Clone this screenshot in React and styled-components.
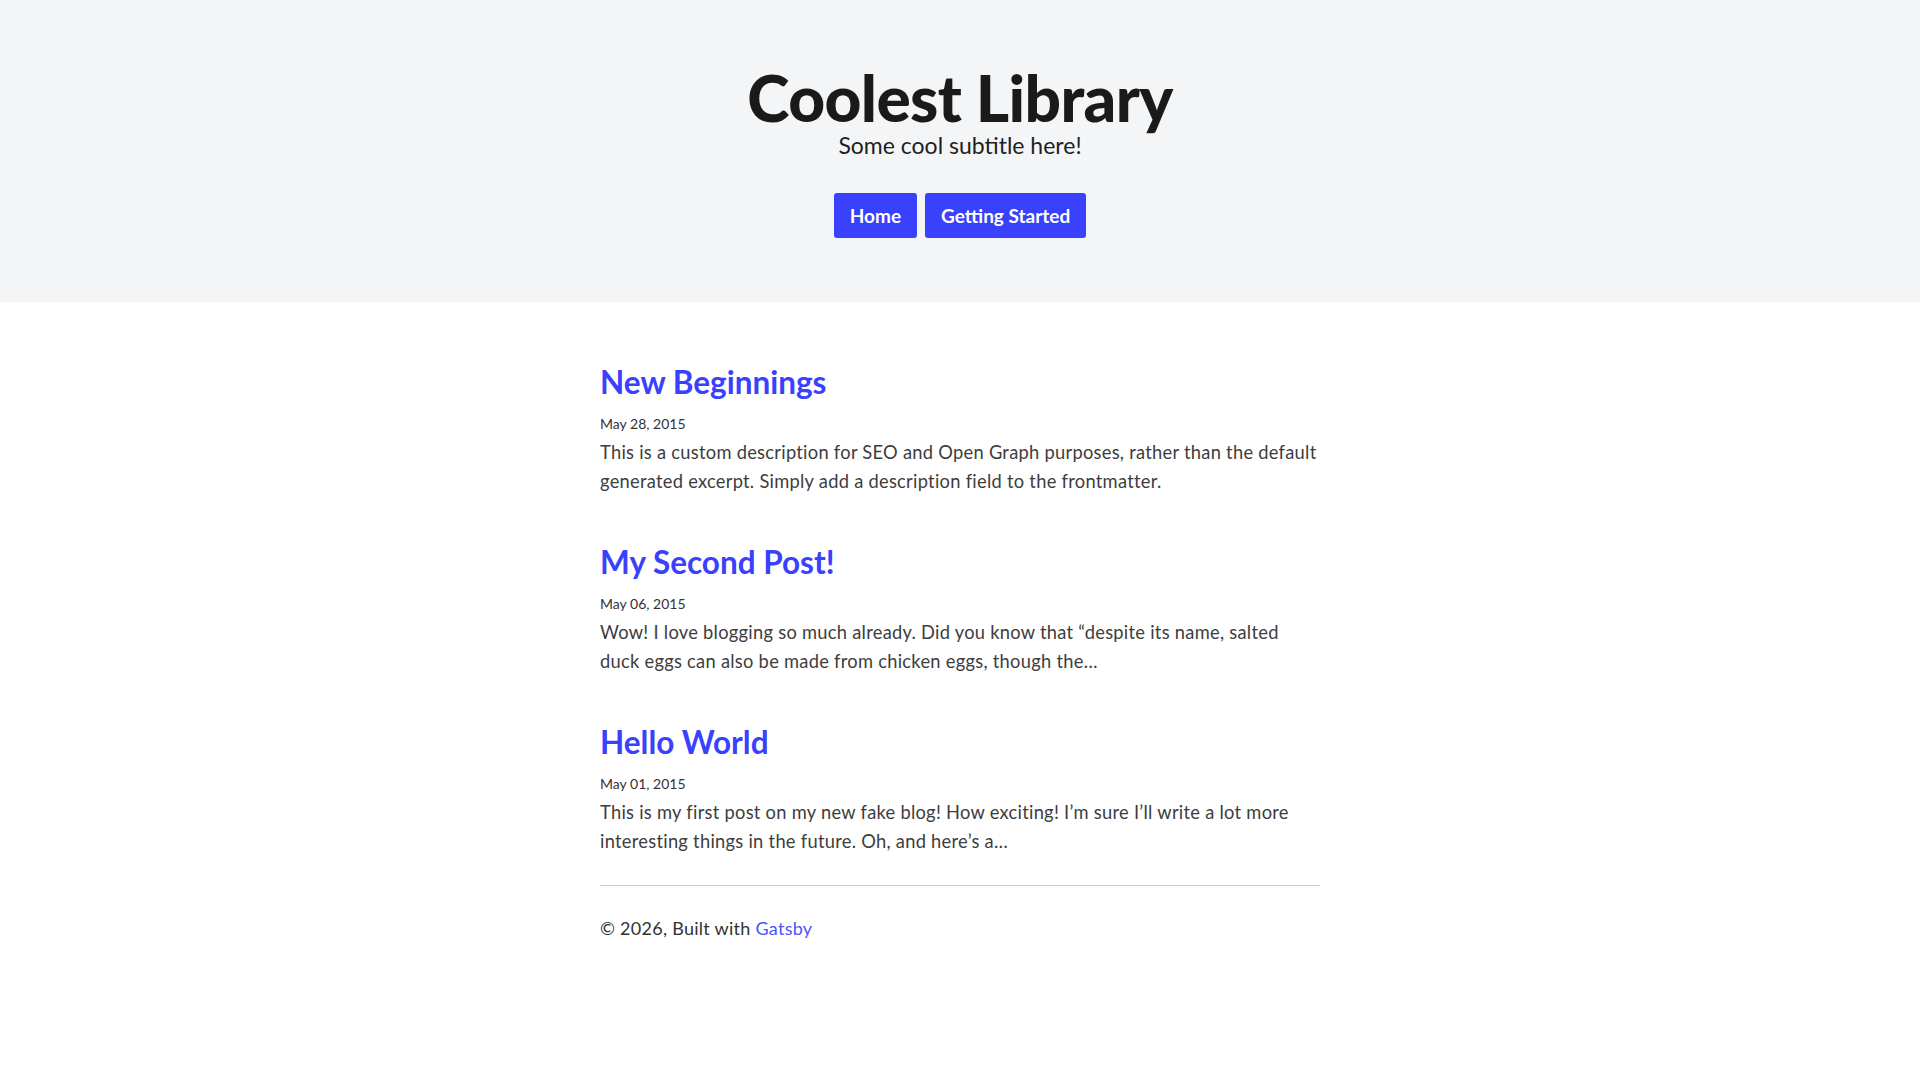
import React from "react";
import styled, { createGlobalStyle } from "styled-components";

const Global = createGlobalStyle`
  html, body { margin: 0; padding: 0; background: #ffffff; }
  body {
    font-family: Lato, "Noto Sans", "Liberation Sans", sans-serif;
    color: #333333;
    -webkit-font-smoothing: antialiased;
  }
  * { box-sizing: border-box; }
`;

const Header = styled.header`
  background: #f4f5f7;
  padding: 66px 24px 64px;
  display: flex;
  flex-direction: column;
  align-items: center;
`;

const SiteTitle = styled.h1`
  margin: 0;
  font-size: 64px;
  line-height: 64px;
  font-weight: 900;
  color: #1a1a1a;
  letter-spacing: -0.01em;
`;

const Subtitle = styled.p`
  margin: 1px 0 0;
  font-size: 23px;
  line-height: 28px;
  color: #1f1f1f;
`;

const Nav = styled.nav`
  margin-top: 34px;
  display: flex;
  gap: 8px;
`;

const NavButton = styled.a`
  display: block;
  background: #3a41fc;
  color: #ffffff;
  font-size: 19px;
  font-weight: 700;
  line-height: 25px;
  padding: 10px 16px;
  border-radius: 3px;
  text-decoration: none;
`;

const Main = styled.main`
  max-width: 720px;
  margin: 0 auto;
  padding-top: 60px;
`;

const Article = styled.article`
  margin-bottom: 46px;
  &:last-of-type { margin-bottom: 0; }
`;

const PostTitle = styled.h2`
  margin: 0;
  font-size: 31.5px;
  line-height: 40px;
  font-weight: 700;
  a { color: #3a41fc; text-decoration: none; }
`;

const PostDate = styled.small`
  display: block;
  margin-top: 10px;
  font-size: 14px;
  line-height: 24px;
  color: #333333;
`;

const Excerpt = styled.p`
  margin: 2px 0 0;
  font-size: 18.3px;
  line-height: 29px;
  letter-spacing: 0.015em;
  color: #3d3d3d;
`;

const Divider = styled.hr`
  margin: 29px 0 0;
  border: 0;
  border-top: 1px solid #cccccc;
`;

const Footer = styled.footer`
  margin-top: 28px;
  font-size: 18px;
  line-height: 29px;
  letter-spacing: 0.015em;
  color: #333333;
  a { color: #4a54ff; text-decoration: none; }
`;

const posts = [
  {
    title: "New Beginnings",
    date: "May 28, 2015",
    text: "This is a custom description for SEO and Open Graph purposes, rather than the default generated excerpt. Simply add a description field to the frontmatter.",
  },
  {
    title: "My Second Post!",
    date: "May 06, 2015",
    text: "Wow! I love blogging so much already. Did you know that \u201cdespite its name, salted duck eggs can also be made from chicken eggs, though the\u2026",
  },
  {
    title: "Hello World",
    date: "May 01, 2015",
    text: "This is my first post on my new fake blog! How exciting! I\u2019m sure I\u2019ll write a lot more interesting things in the future. Oh, and here\u2019s a\u2026",
  },
];

export default function App() {
  return (
    <>
      <Global />
      <Header>
        <SiteTitle>Coolest Library</SiteTitle>
        <Subtitle>Some cool subtitle here!</Subtitle>
        <Nav>
          <NavButton href="#">Home</NavButton>
          <NavButton href="#">Getting Started</NavButton>
        </Nav>
      </Header>
      <Main>
        {posts.map((p) => (
          <Article key={p.title}>
            <PostTitle>
              <a href="#">{p.title}</a>
            </PostTitle>
            <PostDate>{p.date}</PostDate>
            <Excerpt>{p.text}</Excerpt>
          </Article>
        ))}
        <Divider />
        <Footer>
          © 2026, Built with <a href="#">Gatsby</a>
        </Footer>
      </Main>
    </>
  );
}
